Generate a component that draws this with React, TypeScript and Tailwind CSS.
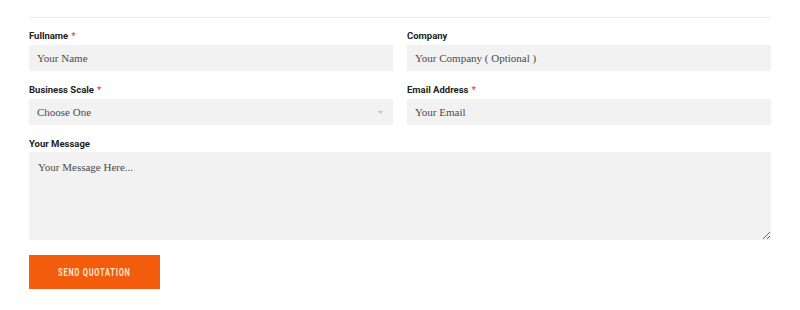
import React from "react";

const labelCls =
  "block text-[9.5px] leading-[12px] font-bold text-[#222] font-['Roboto',sans-serif]";
const fieldCls =
  "block w-full h-[26px] bg-[#f2f2f2] border-0 outline-none px-[8px] text-[11px] text-[#4a4a4a] placeholder:text-[#4a4a4a] font-['Liberation_Serif',serif]";

function Label({ text, req }: { text: string; req?: boolean }) {
  return (
    <label className={labelCls + " mb-[3px]"}>
      {text}
      {req && <span className="text-[#e8494c] ml-[3px]">*</span>}
    </label>
  );
}

export default function App() {
  return (
    <div className="w-[800px] h-[310px] bg-white overflow-hidden">
      <div className="mx-[29px] pt-[17px]">
        <div className="h-px bg-[#ececec]" />
        <div className="grid grid-cols-2 gap-x-[14px] gap-y-[13px] mt-[12px]">
          <div>
            <Label text="Fullname" req />
            <input className={fieldCls} placeholder="Your Name" />
          </div>
          <div>
            <Label text="Company" />
            <input className={fieldCls} placeholder="Your Company ( Optional )" />
          </div>
          <div>
            <Label text="Business Scale" req />
            <div className="relative">
              <div className={fieldCls + " flex items-center"}>Choose One</div>
              <svg
                className="absolute right-[10px] top-[12px]"
                width="5"
                height="3"
                viewBox="0 0 5 3"
              >
                <path d="M0 0 L5 0 L2.5 3 Z" fill="#c4c4c4" />
              </svg>
            </div>
          </div>
          <div>
            <Label text="Email Address" req />
            <input className={fieldCls} placeholder="Your Email" />
          </div>
        </div>
        <div className="mt-[13px]">
          <label className={labelCls + " mb-[2px]"}>Your Message</label>
          <textarea
            className="block w-full h-[88px] bg-[#f2f2f2] border-0 outline-none px-[9px] pt-[7px] text-[11px] text-[#4a4a4a] placeholder:text-[#4a4a4a] font-['Liberation_Serif',serif] resize-y"
            placeholder="Your Message Here..."
          />
        </div>
        <button className="mt-[15px] w-[131px] h-[34px] bg-[#f25c0c] flex items-center justify-center">
          <span className="inline-block scale-x-75 text-[#fde3cc] text-[10px] font-bold tracking-[1px] font-['Roboto',sans-serif]">
            SEND QUOTATION
          </span>
        </button>
      </div>
    </div>
  );
}
